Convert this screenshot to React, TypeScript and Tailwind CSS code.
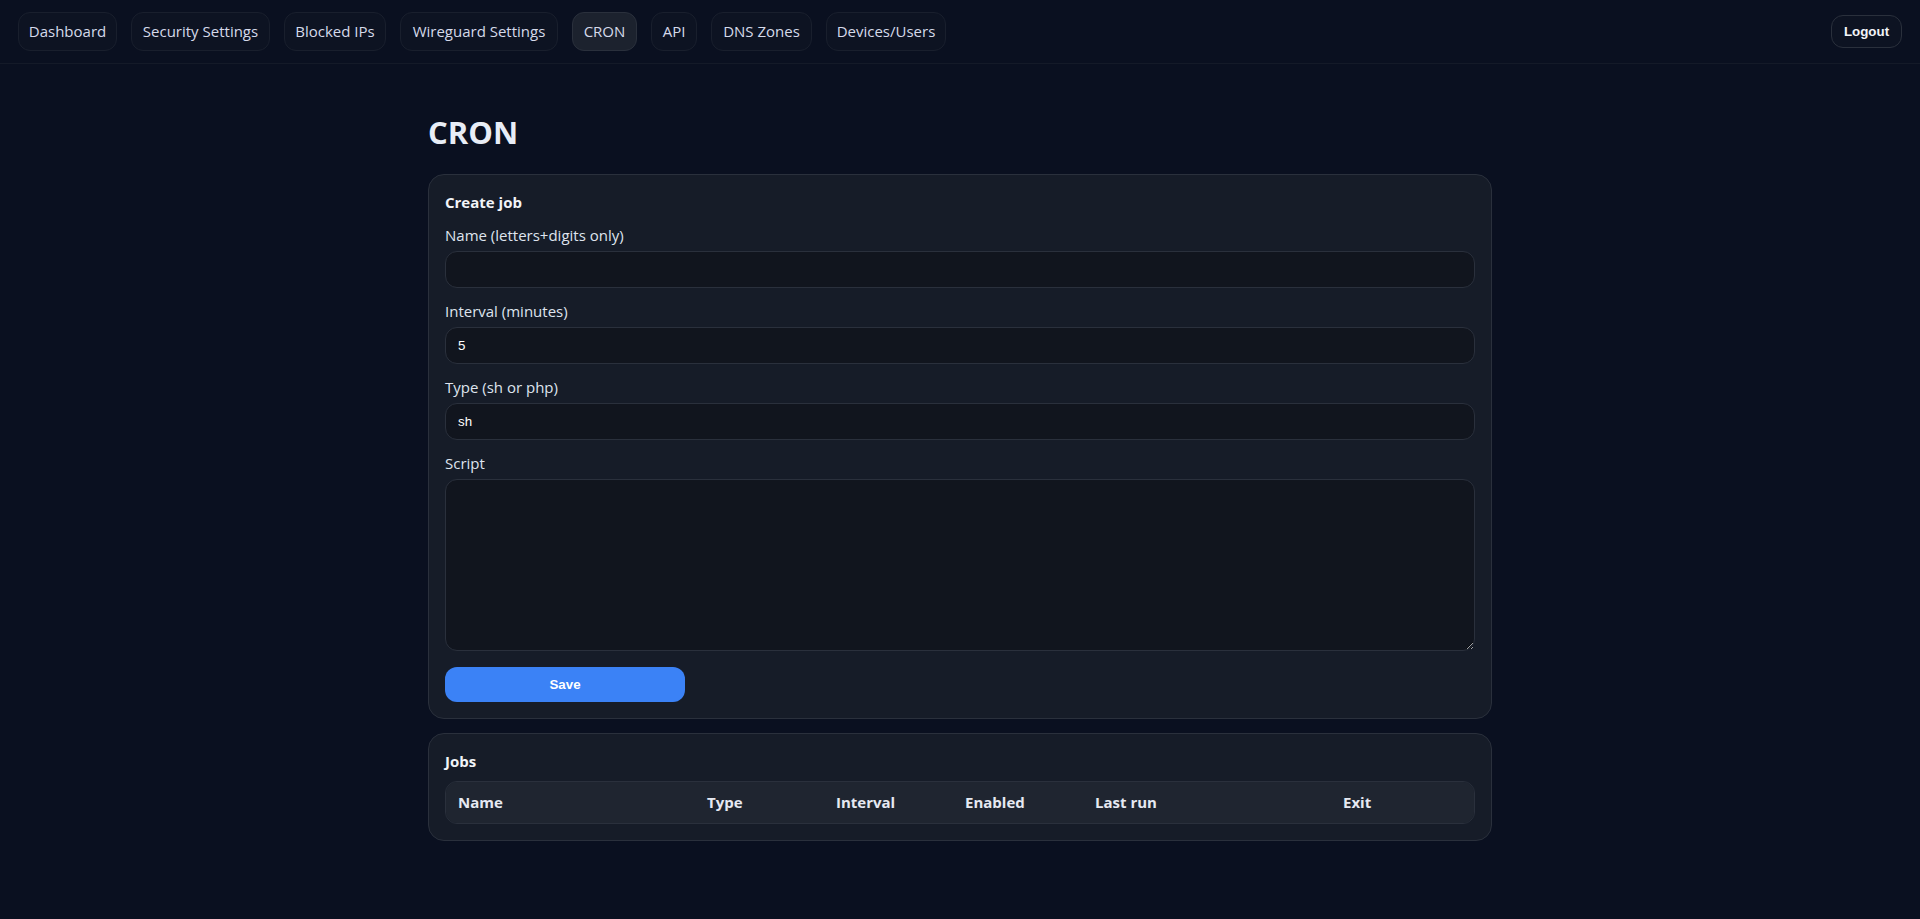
const NAV = [
  { label: "Dashboard", width: "w-[99px]" },
  { label: "Security Settings", width: "w-[139px]" },
  { label: "Blocked IPs", width: "w-[102px]" },
  { label: "Wireguard Settings", width: "w-[158px]" },
  { label: "CRON", width: "w-[65px]" },
  { label: "API", width: "w-[46px]" },
  { label: "DNS Zones", width: "w-[101px]" },
  { label: "Devices/Users", width: "w-[120px]" },
];

const COLUMNS = [
  { label: "Name", width: "w-[249px]" },
  { label: "Type", width: "w-[129px]" },
  { label: "Interval", width: "w-[129px]" },
  { label: "Enabled", width: "w-[130px]" },
  { label: "Last run", width: "w-[248px]" },
  { label: "Exit", width: "w-[145px]" },
];

const fieldClass =
  "block w-full rounded-[12px] border border-[#2a303c] bg-[#11151e] px-3 text-[13.33px] text-white outline-none font-['Liberation_Sans',sans-serif]";

function Field({ label, value }: { label: string; value: string }) {
  return (
    <div className="mb-[13px]">
      <label className="mb-[6px] block text-[15px] leading-[20px] text-[#dfe4ee]">{label}</label>
      <input readOnly value={value} className={`${fieldClass} h-[37px]`} />
    </div>
  );
}

export default function App() {
  return (
    <div className="min-h-[919px] bg-[#0a1020] font-['Open_Sans','Noto_Sans',sans-serif] text-[#e6e9f2]">
      <header className="flex h-[64px] items-center justify-between border-b border-[#141a28] px-[18px]">
        <nav className="flex items-center gap-[14px]">
          {NAV.map((item) => (
            <a
              key={item.label}
              href="#"
              className={`flex h-[39px] items-center justify-center rounded-[12px] border text-[15px] text-[#d5daea] ${item.width} ${
                item.label === "CRON" ? "border-[#2a303c] bg-[#1c222e]" : "border-[#191f2d] bg-[#0d1322]"
              }`}
            >
              {item.label}
            </a>
          ))}
        </nav>
        <button
          type="button"
          className="h-[33px] w-[71px] rounded-[12px] border border-[#2a303c] bg-[#0d1322] text-[13.33px] font-bold text-[#f2f4f8] font-['Liberation_Sans',sans-serif]"
        >
          Logout
        </button>
      </header>

      <main className="mx-auto w-[1100px] px-[18px]">
        <h1 className="mt-[48px] mb-[22px] text-[31px] leading-[40px] font-bold text-[#e8edf6]">CRON</h1>

        <section className="mb-[14px] rounded-[16px] border border-[#2a303c] bg-[#161c28] p-[16px]">
          <h2 className="mt-[1px] mb-[13px] text-[15px] leading-[20px] font-bold text-[#f2f4f8]">Create job</h2>
          <Field label="Name (letters+digits only)" value="" />
          <Field label="Interval (minutes)" value="5" />
          <Field label="Type (sh or php)" value="sh" />
          <div className="mb-[16px]">
            <label className="mb-[6px] block text-[15px] leading-[20px] text-[#dfe4ee]">Script</label>
            <textarea readOnly className={`${fieldClass} h-[172px] py-2`} />
          </div>
          <button
            type="button"
            className="block h-[35px] w-[240px] rounded-[12px] bg-[#3b82f6] text-[13.33px] font-bold text-white font-['Liberation_Sans',sans-serif]"
          >
            Save
          </button>
        </section>

        <section className="rounded-[16px] border border-[#2a303c] bg-[#161c28] p-[16px]">
          <h2 className="mt-[1px] mb-[10px] text-[15px] leading-[20px] font-bold text-[#f2f4f8]">Jobs</h2>
          <div className="overflow-hidden rounded-[12px] border border-[#2a303c]">
            <table className="w-full table-fixed border-collapse">
              <thead>
                <tr className="h-[41px] bg-[#1f2530]">
                  {COLUMNS.map((col) => (
                    <th
                      key={col.label}
                      className={`${col.width} px-[12px] text-left text-[15px] font-bold text-[#e6e9f2]`}
                    >
                      {col.label}
                    </th>
                  ))}
                </tr>
              </thead>
            </table>
          </div>
        </section>
      </main>
    </div>
  );
}
